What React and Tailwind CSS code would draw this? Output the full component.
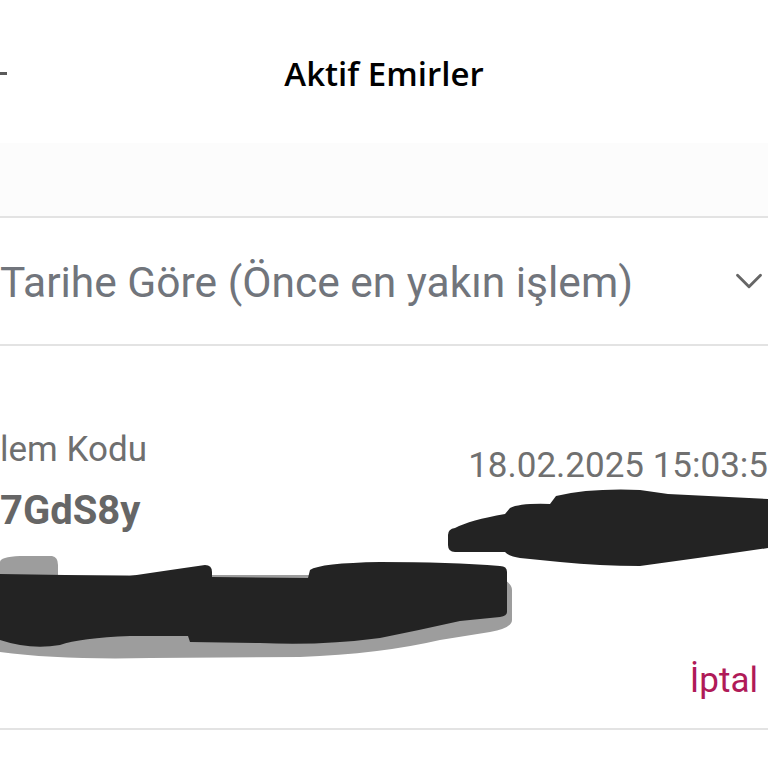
import React from 'react';
import { ChevronDown } from 'lucide-react';

// Redaction scribbles drawn over the order card
const Scribbles = () => (
  <svg
    className="absolute left-0 top-0 pointer-events-none"
    width="768"
    height="768"
    viewBox="0 0 768 768"
  >
    {/* gray under-stroke */}
    <path
      d="M0,562 Q0,557 20,556 L52,556 Q58,557 58,565 L58,575 L490,575 Q512,580 512,590 L512,620 Q512,628 490,632 L440,640 Q380,654 300,657 L150,658 Q60,660 0,652 Z"
      fill="#9d9d9d"
    />
    {/* left black stroke */}
    <path
      d="M0,574 L130,576 Q170,570 205,565 Q212,565 212,572 L212,577 L308,578 L310,570 Q320,563 380,562 Q450,562 500,566 Q507,566 507,572 L507,612 Q507,616 500,617 L460,621 Q420,630 380,638 Q320,646 260,643 L190,642 L188,636 L130,636 Q80,638 60,645 Q30,650 0,640 Z"
      fill="#232323"
    />
    {/* right black stroke */}
    <path
      d="M455,528 Q470,520 505,514 L510,508 Q520,503 550,504 L556,496 Q590,488 640,490 L668,494 L768,499 L768,548 Q700,558 640,566 Q600,566 560,562 L520,558 Q508,556 505,552 L455,552 Q448,552 448,545 L448,535 Q448,529 455,528 Z"
      fill="#232323"
    />
  </svg>
);

const App = () => {
  return (
    <div className="relative w-[768px] h-[768px] overflow-hidden bg-white" style={{ fontFamily: 'Roboto, "Liberation Sans", sans-serif' }}>
      {/* Header */}
      <div className="relative h-[143px] flex items-center justify-center">
        <div className="absolute left-0 top-[72px] w-[7px] h-[3px] bg-[#5a5a5a]" />
        <h1
          className="text-[33px] font-semibold text-black leading-none pt-[4px]"
          style={{ fontFamily: '"Open Sans", "Noto Sans", sans-serif' }}
        >
          Aktif Emirler
        </h1>
      </div>

      {/* Spacer band */}
      <div className="h-[73px] bg-[#fcfcfc]" />

      {/* Sort select */}
      <div className="h-[130px] border-y-2 border-[#e3e3e3] flex items-center justify-between">
        <span className="text-[42.5px] text-[#71757c] leading-none pt-[4px]">
          Tarihe Göre (Önce en yakın işlem)
        </span>
        <ChevronDown className="w-[46px] h-[46px] text-[#666] -mr-[4px]" strokeWidth={1.5} />
      </div>

      {/* Order card */}
      <div className="h-[384px] border-b-2 border-[#e3e3e3] flex flex-col">
        <div className="flex justify-between items-start pt-[86px]">
          <div className="flex flex-col">
            <span className="text-[35px] text-[#6f6f6f] leading-none">lem Kodu</span>
            <span className="text-[40px] font-bold text-[#666] leading-none mt-[24px]">
              7GdS8y
            </span>
          </div>
          <span className="text-[35px] text-[#707070] leading-none whitespace-nowrap pt-[16px]">
            18.02.2025 15:03:5
          </span>
        </div>
        <div className="mt-auto pb-[30px] flex justify-end pr-[10px]">
          <span className="text-[35px] text-[#b01a58] leading-none">İptal</span>
        </div>
      </div>

      <Scribbles />
    </div>
  );
};

export default App;
